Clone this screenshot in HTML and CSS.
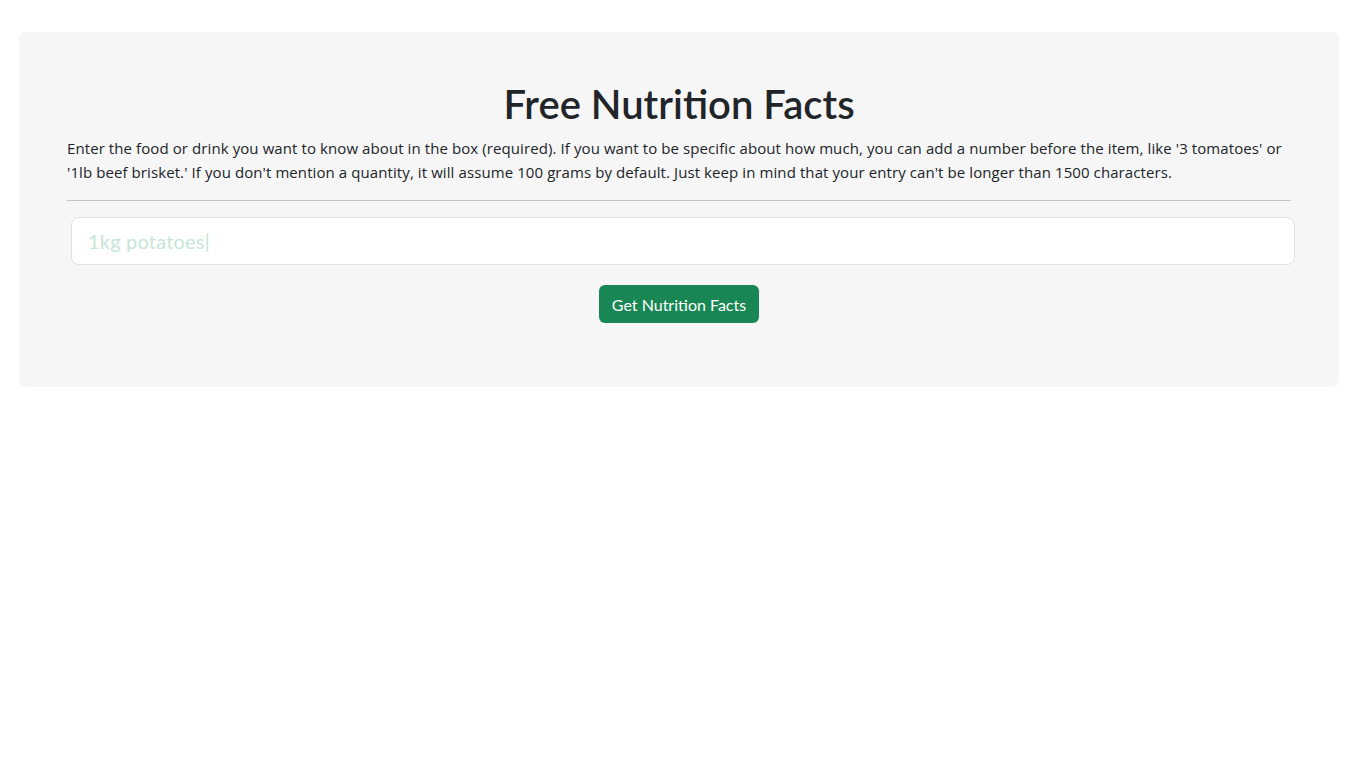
FILE: index.html
```html
<!DOCTYPE html>
<html lang="en">
<head>
<meta charset="utf-8">
<title>Free Nutrition Facts</title>
<link rel="stylesheet" href="styles.css">
</head>
<body>
<main class="card">
  <h1 class="title">Free Nutrition Facts</h1>
  <p class="intro">Enter the food or drink you want to know about in the box (required). If you want to be specific about how much, you can add a number before the item, like '3 tomatoes' or '1lb beef brisket.' If you don't mention a quantity, it will assume 100 grams by default. Just keep in mind that your entry can't be longer than 1500 characters.</p>
  <hr class="rule">
  <form class="form">
    <input class="query" type="text" placeholder="1kg potatoes|">
    <button class="submit" type="button">Get Nutrition Facts</button>
  </form>
</main>
</body>
</html>
```
FILE: styles.css
```css
* { box-sizing: border-box; }
html, body { margin: 0; background: #fff; }
body {
  font-family: "Lato", "Noto Sans", sans-serif;
  font-size: 16px;
  line-height: 24px;
  color: #212529;
  padding: 32px 24px 0 19px;
}
.card {
  background: #f6f6f6;
  border-radius: 6px;
  padding: 48px 48px 64px;
}
.title {
  margin: 0 0 8px;
  text-align: center;
  font-size: 40px;
  line-height: 48px;
  font-weight: 600;
}
.intro {
  margin: 0;
  font-family: "Open Sans", "Noto Sans", sans-serif;
  font-size: 15px;
  letter-spacing: 0.09px;
}
.rule {
  margin: 16px 0;
  border: 0;
  border-top: 1px solid #c4c4c4;
}
.form {
  display: flex;
  flex-direction: column;
  align-items: center;
  gap: 20px;
}
.query {
  display: block;
  width: 100%;
  margin-left: 8px;
  height: 48px;
  padding: 0 16px;
  font-family: inherit;
  font-size: 20px;
  letter-spacing: 0.2px;
  border: 1px solid #dee2e6;
  border-radius: 8px;
  background: #fff;
  outline: none;
}
.query::placeholder { color: #c6e6d6; }
.submit {
  height: 38px;
  padding: 0 13px;
  font-family: inherit;
  font-size: 16px;
  color: #fff;
  background: #198754;
  border: 0;
  border-radius: 6px;
}
```
